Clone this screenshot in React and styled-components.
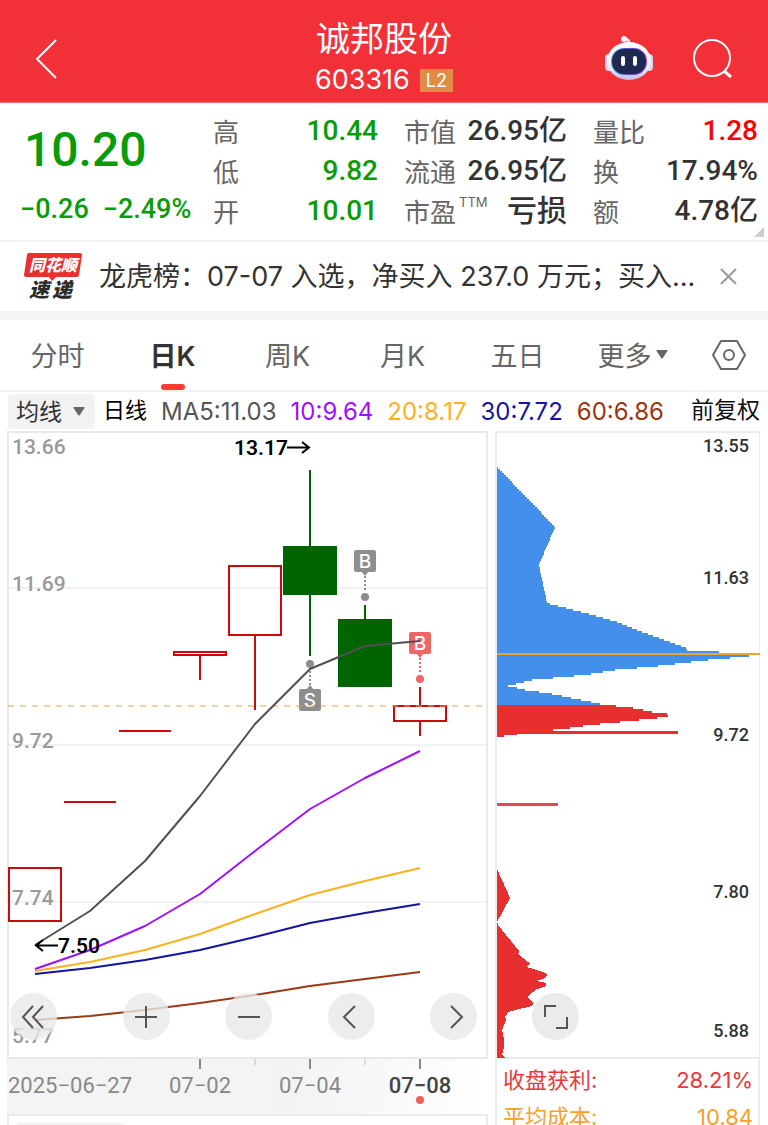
import React from "react";
import styled, { createGlobalStyle } from "styled-components";

const cjk = `"Noto Sans CJK SC", sans-serif`;
const uiFont = `Inter, ${cjk}`;
const numFont = `Roboto, ${cjk}`;

const Global = createGlobalStyle`
  *, *::before, *::after { box-sizing: border-box; }
  body { margin: 0; background: #fff; }
  button, select { font: inherit; color: inherit; border: 0; background: none; padding: 0; margin: 0; cursor: pointer; }
  svg { display: block; }
`;

const Screen = styled.main`
  display: flex;
  flex-direction: column;
  height: 100vh;
  overflow: hidden;
  background: #fff;
  color: #333;
  font-family: ${uiFont};
`;

/* ---------- header ---------- */
const Header = styled.header`
  flex: none;
  display: grid;
  grid-template-columns: 1fr auto 1fr;
  align-items: center;
  height: 103px;
  padding: 16px 32px 0;
  background: #f23038;
  border-bottom: 1px solid #f5686e;
  color: #fff;
`;

const TitleBlock = styled.div`
  display: flex;
  flex-direction: column;
  align-items: center;
`;

const StockName = styled.h1`
  margin: 0;
  font: 400 34px/42px ${cjk};
`;

const CodeRow = styled.div`
  display: flex;
  align-items: center;
  gap: 10px;
  font-size: 27px;
  line-height: 44px;
`;

const LevelBadge = styled.span`
  padding: 0 6px;
  background: #e08c46;
  font-size: 18px;
  line-height: 23px;
`;

const IconButton = styled.button`
  display: flex;
  align-items: center;
  justify-content: center;
`;

const BackButton = styled(IconButton)`
  justify-self: start;
`;

const HeaderActions = styled.div`
  display: flex;
  justify-content: flex-end;
  align-items: center;
  gap: 38px;
`;

/* ---------- quote ---------- */
const Quote = styled.section`
  flex: none;
  position: relative;
  display: grid;
  grid-template-columns: minmax(0, 183fr) minmax(0, 165fr) minmax(0, 163fr) minmax(0, 165fr);
  column-gap: 26px;
  padding: 8px 10px 9px 4px;
  border-bottom: 2px solid #f1f1f1;
`;

const PriceBlock = styled.div`
  display: flex;
  flex-direction: column;
  color: #099c09;
`;

const Price = styled.strong`
  padding-left: 20px;
  font: 500 48px/78px ${numFont};
`;

const Change = styled.div`
  display: flex;
  gap: 14px;
  padding-left: 16px;
  font: 500 27px/40px ${numFont};
  white-space: nowrap;
`;

const Stats = styled.dl`
  margin: 0;
`;

const Stat = styled.div`
  display: flex;
  justify-content: space-between;
  height: 40px;
  white-space: nowrap;
`;

const StatLabel = styled.dt`
  font: 400 26px/40px ${cjk};
  color: #666;
`;

const Sup = styled.sup`
  font: 400 13px/13px ${uiFont};
  vertical-align: 15px;
  margin-left: 3px;
`;

const StatValue = styled.dd`
  margin: 0;
  font: 500 ${(p) => (p.$text ? 30 : 28)}px/40px ${numFont};
  color: ${(p) => p.$color || "#333"};
`;

const Corner = styled.span`
  position: absolute;
  right: 4px;
  bottom: 3px;
  border-left: 10px solid transparent;
  border-bottom: 10px solid #ccc;
`;

/* ---------- news ---------- */
const News = styled.section`
  flex: none;
  display: flex;
  align-items: center;
  height: 78px;
  padding: 0 31px 0 24px;
  border-bottom: 9px solid #f4f4f4;
`;

const NewsLink = styled.a`
  flex: 1;
  min-width: 0;
  margin-left: 17px;
  overflow: hidden;
  color: #333;
  text-decoration: none;
  font-size: 27px;
  line-height: 40px;
  white-space: nowrap;
`;

/* ---------- tabs ---------- */
const Tabs = styled.nav`
  flex: none;
  display: flex;
  height: 72px;
  border-bottom: 2px solid #f1f1f1;
`;

const Tab = styled.button`
  flex: 115;
  position: relative;
  display: flex;
  align-items: center;
  justify-content: center;
  gap: 4px;
  padding-bottom: 2px;
  font-size: 27px;
  font-weight: ${(p) => (p.$active ? 600 : 400)};
  color: ${(p) => (p.$active ? "#333" : "#666")};

  &::after {
    content: "";
    display: ${(p) => (p.$active ? "block" : "none")};
    position: absolute;
    bottom: 0;
    left: calc(50% - 12px);
    width: 24px;
    height: 6px;
    border-radius: 3px;
    background: #fd3c34;
  }
`;

const SettingsTab = styled(IconButton)`
  flex: 78;
`;

/* ---------- moving-average legend ---------- */
const Legend = styled.div`
  flex: none;
  display: flex;
  align-items: center;
  gap: 14px;
  height: 39px;
  padding: 0 8px;
  font-size: 24px;
  white-space: nowrap;
`;

const SelectBox = styled.label`
  position: relative;
  display: flex;
  align-items: center;
  width: 87px;
  height: 35px;
  margin-right: -6px;
  border-radius: 4px;
  background: #f2f2f2;
  color: #333;

  select {
    width: 100%;
    height: 100%;
    padding-left: 8px;
    appearance: none;
    font-size: 23px;
  }
  svg {
    position: absolute;
    right: 10px;
    pointer-events: none;
  }
`;

const Period = styled.span`
  font-size: 22px;
  line-height: 30px;
  padding-bottom: 3px;
  color: #000;
`;

const LegendItem = styled.span`
  color: ${(p) => p.$color};
`;

const Adjust = styled.button`
  margin-left: auto;
  padding-bottom: 3px;
  font-size: 23px;
  line-height: 30px;
  color: #111;
`;

/* ---------- charts ---------- */
const Charts = styled.section`
  flex: none;
  display: grid;
  grid-template-columns: 481fr 265fr;
  column-gap: 7px;
  padding: 0 8px 0 7px;
`;

const Panel = styled.div`
  position: relative;
`;

const Plot = styled.svg`
  width: 100%;
  height: auto;
`;

const Controls = styled.div`
  position: absolute;
  left: 3px;
  right: 11px;
  bottom: 19px;
  display: flex;
  justify-content: space-between;

  button:first-child { margin-right: 10px; }
`;

const RoundButton = styled.button`
  display: flex;
  align-items: center;
  justify-content: center;
  width: 47px;
  height: 47px;
  border-radius: 50%;
  background: rgba(233, 233, 233, 0.8);
`;

const ExpandButton = styled(RoundButton)`
  position: absolute;
  left: 37px;
  bottom: 19px;
  background: #ebebeb;
`;

const NextPanel = styled.div`
  height: 40px;
  padding: 7px 7px 0;
  border: 2px solid #ececec;

  &::before {
    content: "";
    display: block;
    width: 110px;
    height: 30px;
    border-radius: 4px;
    background: #f2f2f2;
  }
`;

const CostList = styled.dl`
  margin: 0;
  padding: 3px 5px 0 6px;
  border: solid #ececec;
  border-width: 0 2px;
  height: 120px;
`;

const CostRow = styled.div`
  display: flex;
  justify-content: space-between;
  font-size: 22px;
  line-height: 37px;
  color: ${(p) => p.$color};

  dd { margin: 0; }
`;

const quoteColumns = [
  [
    { label: "高", value: "10.44", color: "#099c09" },
    { label: "低", value: "9.82", color: "#099c09" },
    { label: "开", value: "10.01", color: "#099c09" },
  ],
  [
    { label: "市值", value: "26.95亿" },
    { label: "流通", value: "26.95亿" },
    { label: "市盈", sup: "TTM", value: "亏损", text: true },
  ],
  [
    { label: "量比", value: "1.28", color: "#ff0000" },
    { label: "换", value: "17.94%" },
    { label: "额", value: "4.78亿" },
  ],
];

const tabs = ["分时", "日K", "周K", "月K", "五日", "更多"];

const averages = [
  ["MA5:11.03", "#555"],
  ["10:9.64", "#a010ff"],
  ["20:8.17", "#ffb01e"],
  ["30:7.72", "#1414a0"],
  ["60:6.86", "#9c3410"],
];

const days = [35, 90, 145, 200, 255, 310, 365, 420];
const lines = [
  { color: "#9c3a12", y: [1020, 1016, 1010, 1003, 995, 986, 979, 972] },
  { color: "#1414a0", y: [974, 968, 960, 950, 937, 923, 913, 904] },
  { color: "#ffb01e", y: [971, 962, 950, 934, 914, 895, 881, 868] },
  { color: "#a010ff", y: [969, 950, 926, 894, 851, 809, 778, 751] },
  { color: "#505050", y: [945, 911, 861, 796, 724, 669, 646, 641] },
];

const candles = [
  { x: 35, top: 868, bottom: 921 },
  { x: 90, top: 802, bottom: 803 },
  { x: 145, top: 731, bottom: 731 },
  { x: 200, top: 652, bottom: 655, low: 680 },
  { x: 255, top: 566, bottom: 635, low: 710 },
  { x: 310, top: 547, bottom: 594, high: 470, low: 656, fall: true },
  { x: 365, top: 620, bottom: 686, high: 605, fall: true },
  { x: 420, top: 706, bottom: 721, high: 687, low: 736 },
];

function Candle({ x, top, bottom, high, low, fall }) {
  const color = fall ? "#006400" : "#cc0a0a";
  return (
    <g stroke={color} strokeWidth="2">
      {high && <line x1={x} x2={x} y1={high} y2={top} />}
      {low && <line x1={x} x2={x} y1={bottom} y2={low} />}
      {bottom - top < 2 ? (
        <line x1={x - 26} x2={x + 26} y1={top} y2={top} />
      ) : (
        <rect x={x - 26} y={top} width="52" height={bottom - top} fill={fall ? color : "none"} />
      )}
    </g>
  );
}

function Marker({ x, y, letter, color, up }) {
  const d = up ? -1 : 1;
  return (
    <g>
      <rect x={x - 11} y={y - 11} width="22" height="22" rx="2" fill={color} />
      <path d={`M${x - 4} ${y + 10 * d}h8l-4 ${5 * d}z`} fill={color} />
      <line x1={x} x2={x} y1={y + 15 * d} y2={y + 30 * d} stroke={color} strokeWidth="2" strokeDasharray="2 2" />
      <circle cx={x} cy={y + 36 * d} r="4" fill={color} />
      <text x={x} y={y + 7} textAnchor="middle" fontFamily={uiFont} fontSize="19" fontWeight="500" fill="#fff">
        {letter}
      </text>
    </g>
  );
}

function KLineChart() {
  const prices = [["13.66", 454], ["11.69", 591], ["9.72", 748], ["7.74", 905], ["5.77", 1043]];
  return (
    <Plot viewBox="7 431 481 628" role="img" aria-label="日K">
      <rect x="8" y="432" width="479" height="626" fill="#fff" stroke="#e9e9e9" strokeWidth="2" />
      {[588, 745, 902].map((y) => (
        <line key={y} x1="9" x2="486" y1={y} y2={y} stroke="#f1f1f1" strokeWidth="2" />
      ))}
      <g fontFamily={numFont} fontSize="21" fontWeight="500" fill="#999">
        {prices.map(([t, y]) => (
          <text key={t} x="12" y={y}>{t}</text>
        ))}
      </g>
      {candles.map((c) => (
        <Candle key={c.x} {...c} />
      ))}
      <Marker x={310} y={700} letter="S" color="#8e8e8e" up />
      <Marker x={365} y={561} letter="B" color="#8e8e8e" />
      <Marker x={420} y={643} letter="B" color="#ef6666" />
      <line x1="8" x2="486" y1="706" y2="706" stroke="#d9a75a" strokeOpacity="0.5" strokeWidth="2" strokeDasharray="6 6" />
      {lines.map((l) => (
        <polyline key={l.color} fill="none" stroke={l.color} strokeWidth="2" strokeLinejoin="round"
          points={days.map((x, i) => `${x},${l.y[i]}`).join(" ")} />
      ))}
      <g fontFamily={numFont} fontSize="21" fontWeight="600" fill="#000">
        <text x="234" y="455">13.17</text>
        <text x="58" y="953">7.50</text>
      </g>
      <g fill="none" stroke="#000" strokeWidth="2">
        <path d="M287 447.500H308M302 442l7 5.500-7 5.500" />
        <path d="M58 945.500H37M43 940l-7 5.500 7 5.500" />
      </g>
    </Plot>
  );
}

const lossShape = [
  [467, 497], [527, 555], [565, 539], [603, 547], [604, 550], [613, 585], [622, 617], [633, 645], [648, 686],
  [651, 688], [652, 719], [654, 760], [657, 744], [659, 716], [666, 658], [670, 615], [675, 585], [680, 532],
  [686, 508], [690, 525], [694, 552], [705, 605],
];
const gainShape = [
  [705, 608], [708, 633], [712, 652], [715, 674], [718, 657], [721, 630], [725, 590], [729, 563], [733, 523],
  [735, 510], [737, 497],
];
const baseShape = [
  [869, 497], [898, 510], [922, 497], [925, 498], [951, 519], [954, 518], [962, 528], [964, 530], [967, 526],
  [970, 537], [973, 545], [975, 547], [978, 545], [981, 537], [983, 546], [986, 546], [989, 537], [995, 529],
  [997, 527], [1003, 533], [1006, 532], [1009, 519], [1012, 508], [1017, 505], [1020, 506], [1030, 502],
  [1040, 504], [1047, 504], [1055, 502], [1058, 506],
];

// Turns [y, x] outline points into horizontal bars of equal thickness.
function barPath(points, step) {
  const end = points[points.length - 1][0];
  let d = `M497 ${points[0][0]}`;
  for (let y = points[0][0]; y < end; y += step) {
    const mid = Math.min(y + step / 2, end);
    const i = Math.max(1, points.findIndex((p) => p[0] >= mid));
    const [y0, x0] = points[i - 1];
    const [y1, x1] = points[i];
    d += `H${Math.round(x0 + ((x1 - x0) * (mid - y0)) / (y1 - y0))}V${Math.min(y + step, end)}`;
  }
  return d + "H497Z";
}

function ChipChart() {
  const prices = [["13.55", 452], ["11.63", 584], ["9.72", 741], ["7.80", 898], ["5.88", 1037]];
  return (
    <Plot viewBox="495 431 265 628" role="img" aria-label="筹码分布">
      <rect x="496" y="432" width="264" height="626" fill="#fff" stroke="#ececec" strokeWidth="2" />
      <path d={barPath(lossShape, 2)} fill="#448fec" />
      <path d={barPath(gainShape, 2)} fill="#e72f2f" />
      <path d={barPath(baseShape, 1)} fill="#e72f2f" />
      <rect x="497" y="731" width="181" height="3" fill="#e72f2f" />
      <rect x="497" y="803" width="61" height="3" fill="#e8484a" />
      <rect x="497" y="653" width="263" height="2" fill="#f2a32c" />
      <g fontFamily={numFont} fontSize="18" fontWeight="500" fill="#333" textAnchor="end">
        {prices.map(([t, y]) => (
          <text key={t} x="749" y={y}>{t}</text>
        ))}
      </g>
    </Plot>
  );
}

function DateAxis() {
  return (
    <Plot viewBox="7 1059 481 55">
      <defs>
        <linearGradient id="axisFade">
          <stop offset="0" stopColor="#f4f4f4" />
          <stop offset="0.6" stopColor="#f3f3f3" />
          <stop offset="1" stopColor="#fff" />
        </linearGradient>
      </defs>
      <rect x="7" y="1059" width="481" height="55" fill="url(#axisFade)" />
      <g stroke="#888" strokeWidth="2">
        {[200, 310, 420].map((x) => (
          <line key={x} x1={x} x2={x} y1="1059" y2="1069" />
        ))}
      </g>
      <g stroke="#bbb">
        {[255, 365].map((x) => (
          <line key={x} x1={x} x2={x} y1="1059" y2="1065" />
        ))}
      </g>
      <g fontFamily={numFont} fontSize="22" fill="#888" textAnchor="middle">
        <text x="8" y="1093" textAnchor="start">2025−06−27</text>
        <text x="200" y="1093">07−02</text>
        <text x="310" y="1093">07−04</text>
        <text x="420" y="1093" fill="#444" fontWeight="500">07−08</text>
      </g>
      <circle cx="420" cy="1100" r="4" fill="#f25f5f" />
    </Plot>
  );
}

function Stroke({ d, size = 28, width = 2, color = "#555" }) {
  return (
    <svg width={size} height={size} viewBox={`0 0 ${size} ${size}`} fill="none" stroke={color} strokeWidth={width} aria-hidden="true">
      <path d={d} />
    </svg>
  );
}

function Robot() {
  return (
    <svg width="50" height="48" viewBox="0 0 50 48" aria-hidden="true">
      <defs>
        <linearGradient id="shell" x1="0" y1="0" x2="0" y2="1">
          <stop offset="0" stopColor="#fff" />
          <stop offset="0.7" stopColor="#e9e9f8" />
          <stop offset="1" stopColor="#c3bfe8" />
        </linearGradient>
        <linearGradient id="visor" x1="0" y1="0" x2="1" y2="0">
          <stop offset="0" stopColor="#4db4d8" />
          <stop offset="0.5" stopColor="#5a4bd0" />
          <stop offset="1" stopColor="#8e48e8" />
        </linearGradient>
      </defs>
      <path d="M24 10C26 6 24 4 20 4" fill="none" stroke="#e3e3f2" strokeWidth="3" strokeLinecap="round" />
      <circle cx="20" cy="4" r="3" fill="#f6f6fc" />
      <rect x="1" y="19" width="8" height="17" rx="4" fill="#d9d9f0" />
      <rect x="41" y="19" width="8" height="17" rx="4" fill="#d9d9f0" />
      <ellipse cx="25" cy="26" rx="22" ry="19" fill="url(#shell)" />
      <rect x="7" y="13" width="36" height="27" rx="13" fill="url(#visor)" />
      <rect x="8" y="14" width="34" height="25" rx="12" fill="#1f2850" />
      <rect x="17" y="21" width="4" height="10" rx="2" fill="#fff" />
      <rect x="29" y="21" width="4" height="10" rx="2" fill="#fff" />
    </svg>
  );
}

function ExpressLogo() {
  return (
    <svg width="58" height="60" viewBox="0 -5 58 60" role="img" aria-label="同花顺速递">
      <path d="M5 1H56Q58 1 58 3L55 23Q55 25 53 25H32L28 29L25 25H2Q0 25 0 23L3 3Q3 1 5 1Z" fill="#e93030" />
      <g fontFamily={cjk} fontWeight="900" fontStyle="italic">
        <text x="5" y="19" fontSize="16" fill="#fff">同花顺</text>
        <text x="5" y="45" fontSize="20" fill="#2b2b2b">速</text>
        <text x="28" y="45" fontSize="20" fill="#2b2b2b">递</text>
      </g>
    </svg>
  );
}

function Caret() {
  return (
    <svg width="12" height="9" viewBox="0 0 12 9" aria-hidden="true">
      <path d="M1 0h10q1 0 .5 1L6.500 8.500h-1L.5 1Q0 0 1 0z" fill="#666" />
    </svg>
  );
}

export default function App() {
  return (
    <Screen>
      <Global />
      <Header>
        <BackButton aria-label="返回">
          <svg width="28" height="40" viewBox="0 0 28 40" fill="none" stroke="#fff" strokeWidth="2" aria-hidden="true">
            <path d="M24 1L5 20L24 39" />
          </svg>
        </BackButton>
        <TitleBlock>
          <StockName>诚邦股份</StockName>
          <CodeRow>
            603316<LevelBadge>L2</LevelBadge>
          </CodeRow>
        </TitleBlock>
        <HeaderActions>
          <IconButton aria-label="智能助手"><Robot /></IconButton>
          <IconButton aria-label="搜索">
            <svg width="44" height="44" viewBox="0 0 44 44" fill="none" stroke="#fff" strokeWidth="2" aria-hidden="true">
              <circle cx="20" cy="21" r="18" />
              <path d="M32 34L39 40" strokeWidth="3" />
            </svg>
          </IconButton>
        </HeaderActions>
      </Header>

      <Quote>
        <PriceBlock>
          <Price>10.20</Price>
          <Change>
            <span>−0.26</span>
            <span>−2.49%</span>
          </Change>
        </PriceBlock>
        {quoteColumns.map((col) => (
          <Stats key={col[0].label}>
            {col.map((s) => (
              <Stat key={s.label}>
                <StatLabel>
                  {s.label}
                  {s.sup && <Sup>{s.sup}</Sup>}
                </StatLabel>
                <StatValue $color={s.color} $text={s.text}>{s.value}</StatValue>
              </Stat>
            ))}
          </Stats>
        ))}
        <Corner />
      </Quote>

      <News>
        <ExpressLogo />
        <NewsLink href="#news">龙虎榜：07-07 入选，净买入 237.0 万元；买入...</NewsLink>
        <IconButton aria-label="关闭">
          <Stroke d="M1 1L16 16M16 1L1 16" size={17} color="#999" />
        </IconButton>
      </News>

      <Tabs>
        {tabs.map((t) => (
          <Tab key={t} $active={t === "日K"}>
            {t}
            {t === "更多" && <Caret />}
          </Tab>
        ))}
        <SettingsTab aria-label="设置">
          <svg width="36" height="32" viewBox="0 0 36 32" fill="none" stroke="#666" strokeWidth="2" strokeLinejoin="round" aria-hidden="true">
            <path d="M10 2H26L34 16L26 30H10L2 16Z" />
            <circle cx="18" cy="16" r="5" />
          </svg>
        </SettingsTab>
      </Tabs>

      <Legend>
        <SelectBox>
          <select aria-label="指标" defaultValue="均线">
            <option>均线</option>
          </select>
          <Caret />
        </SelectBox>
        <Period>日线</Period>
        {averages.map(([t, c]) => (
          <LegendItem key={t} $color={c}>{t}</LegendItem>
        ))}
        <Adjust>前复权</Adjust>
      </Legend>

      <Charts>
        <div>
          <Panel>
            <KLineChart />
            <Controls>
              <RoundButton aria-label="更早"><Stroke d="M13 3L3 14L13 25M23 3L13 14L23 25" /></RoundButton>
              <RoundButton aria-label="放大"><Stroke d="M3 14H25M14 3V25" /></RoundButton>
              <RoundButton aria-label="缩小"><Stroke d="M3 14H25" /></RoundButton>
              <RoundButton aria-label="向前"><Stroke d="M18 3L7 14L18 25" /></RoundButton>
              <RoundButton aria-label="向后"><Stroke d="M11 3L22 14L11 25" /></RoundButton>
            </Controls>
          </Panel>
          <DateAxis />
          <NextPanel />
        </div>
        <div>
          <Panel>
            <ChipChart />
            <ExpandButton aria-label="全屏"><Stroke d="M3 14V3H14M25 14V25H14" /></ExpandButton>
          </Panel>
          <CostList>
            <CostRow $color="#e93a3a">
              <dt>收盘获利:</dt>
              <dd>28.21%</dd>
            </CostRow>
            <CostRow $color="#f7a02a">
              <dt>平均成本:</dt>
              <dd>10.84</dd>
            </CostRow>
          </CostList>
        </div>
      </Charts>
    </Screen>
  );
}
